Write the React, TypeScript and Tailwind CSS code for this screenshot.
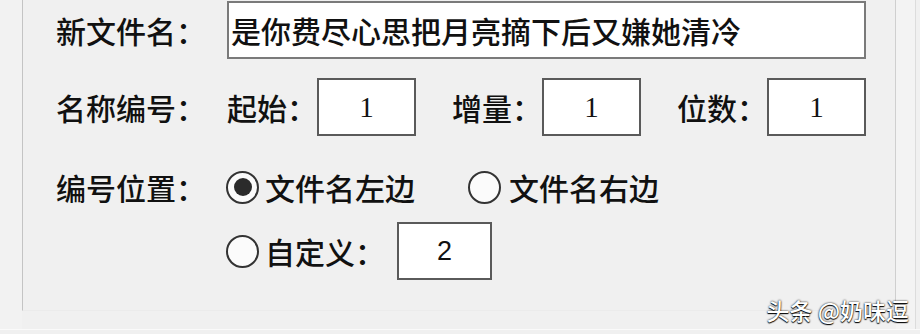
import React from "react";

const cjk = { fontFamily: '"Noto Sans CJK SC", "Noto Sans", sans-serif' };

function Box({ children, w, serif }: { children: React.ReactNode; w: string; serif?: boolean }) {
  return (
    <div
      className={`${w} h-[58px] shrink-0 bg-white border-2 border-[#5a5a5a] flex items-center justify-center text-[#111] leading-none`}
      style={{ fontFamily: serif ? '"Liberation Serif", serif' : '"Liberation Sans", sans-serif' }}
    >
      {children}
    </div>
  );
}

function Radio({ checked }: { checked?: boolean }) {
  return (
    <div className="w-[33px] h-[33px] shrink-0 rounded-full border-[2.5px] border-[#333] bg-[#fbfbfb] flex items-center justify-center">
      {checked && <div className="w-[18px] h-[18px] rounded-full bg-[#2b2b2b]" />}
    </div>
  );
}

export default function App() {
  return (
    <div className="relative w-[920px] h-[334px] overflow-hidden bg-[#f0f0f0] text-[#111]" style={cjk}>
      <div className="flex h-[330px] border-b border-[#fafafa]">
        <div className="w-[22px] shrink-0 bg-[#f2f2f2]" />
        <div className="w-[874px] h-[311px] shrink-0 border-l border-r border-b border-l-[#c4c4c4] border-r-[#cfcfcf] border-b-[#ebebeb] pl-[33px] pt-[1px] flex flex-col text-[30px] leading-none font-medium">
          {/* Row 1 */}
          <div className="flex items-center h-[58px]">
            <div className="w-[171px] shrink-0">新文件名：</div>
            <div className="w-[639px] h-[58px] bg-white border-2 border-[#7a7a7a] flex items-center pl-[2px] text-[30px]">
              是你费尽心思把月亮摘下后又嫌她清冷
            </div>
          </div>
          {/* Row 2 */}
          <div className="flex items-center h-[58px] mt-[19px]">
            <div className="w-[171px] shrink-0">名称编号：</div>
            <div className="w-[90px] shrink-0">起始：</div>
            <Box w="w-[99px]" serif>
              <span className="text-[29px] font-normal">1</span>
            </Box>
            <div className="w-[90px] shrink-0 ml-[36px]">增量：</div>
            <Box w="w-[99px]" serif>
              <span className="text-[29px] font-normal">1</span>
            </Box>
            <div className="w-[90px] shrink-0 ml-[36px]">位数：</div>
            <Box w="w-[99px]" serif>
              <span className="text-[29px] font-normal">1</span>
            </Box>
          </div>
          {/* Row 3 */}
          <div className="flex items-center h-[44px] mt-[29px]">
            <div className="w-[170px] shrink-0">编号位置：</div>
            <Radio checked />
            <div className="ml-[6px] w-[203px] shrink-0">文件名左边</div>
            <Radio />
            <div className="ml-[8px]">文件名右边</div>
          </div>
          {/* Row 4 */}
          <div className="flex items-center h-[58px] mt-[13px]">
            <div className="w-[170px] shrink-0" />
            <Radio />
            <div className="ml-[6px] w-[132px] shrink-0">自定义：</div>
            <Box w="w-[95px]">
              <span className="text-[27px] font-normal">2</span>
            </Box>
          </div>
        </div>
        <div className="w-[20px] shrink-0 border-r border-[#dcdcdc] bg-[#f3f3f3]" />
      </div>
      <div
        className="absolute right-[11px] bottom-[12px] text-[23px] leading-none text-white font-medium [text-shadow:0_0_2px_#000,0_1px_1px_#000]"
        style={cjk}
      >
        头条 @奶味逗
      </div>
    </div>
  );
}
